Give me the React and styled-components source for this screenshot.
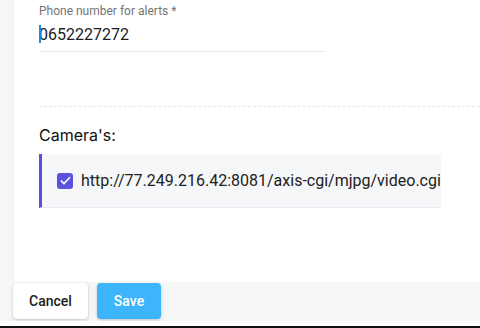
import React from "react";
import styled, { createGlobalStyle } from "styled-components";

const Global = createGlobalStyle`
  html, body {
    margin: 0;
    padding: 0;
    background: #f5f6f8;
    font-family: Roboto, "Liberation Sans", sans-serif;
  }
`;

const Page = styled.div`
  width: 480px;
  height: 328px;
  display: flex;
  flex-direction: column;
  overflow: hidden;
  background: #f5f6f8;
`;

const Panel = styled.div`
  height: 282px;
  margin-left: 13px;
  padding: 3px 0 0 25px;
  box-sizing: border-box;
  background: #fff;
  border-left: 1px solid #eef0f3;
`;

const Field = styled.div`
  width: 287px;
  border-bottom: 1px solid #e7e9ef;
  padding-bottom: 6px;
`;

const Label = styled.div`
  font-size: 12px;
  line-height: 16px;
  color: #757575;
`;

const Value = styled.div`
  position: relative;
  margin-top: 6px;
  font-size: 16px;
  line-height: 20px;
  color: #212121;
  &::before {
    content: "";
    position: absolute;
    left: 0;
    top: 0;
    width: 2px;
    height: 18px;
    background: #1e88e5;
  }
`;

const Divider = styled.div`
  margin-top: 54px;
  border-top: 1px dashed #e3e5e9;
`;

const SectionTitle = styled.h3`
  margin: 18px 0 0;
  font-family: Inter, "Open Sans", sans-serif;
  font-size: 16px;
  font-weight: 400;
  line-height: 21px;
  color: #111;
`;

const CameraRow = styled.label`
  margin-top: 8px;
  width: 402px;
  height: 54px;
  box-sizing: border-box;
  display: flex;
  align-items: center;
  gap: 8px;
  padding-left: 15px;
  background: #f6f7f9;
  border-left: 3px solid #5b4fe0;
  border-bottom: 1px solid #e8eaf0;
  overflow: hidden;
  white-space: nowrap;
`;

const Check = styled.span`
  flex: none;
  width: 16px;
  height: 16px;
  border-radius: 3px;
  background: ${(p) => (p.checked ? "#5c52e0" : "#fff")};
  display: flex;
  align-items: center;
  justify-content: center;
`;

const Url = styled.span`
  font-size: 16px;
  color: #212121;
`;

const Footer = styled.div`
  height: 39px;
  display: flex;
  align-items: flex-start;
  gap: 9px;
  padding: 1px 0 0 13px;
  box-sizing: border-box;
`;

const Button = styled.button`
  height: 36px;
  padding: 0 ${(p) => (p.primary ? "17px" : "16px")};
  border: none;
  border-radius: 4px;
  font-family: Roboto, "Liberation Sans", sans-serif;
  font-size: 14px;
  font-weight: 500;
  color: ${(p) => (p.primary ? "#fff" : "#1b1b1b")};
  background: ${(p) => (p.primary ? "#3db5fc" : "#fff")};
  box-shadow: 0 1px 3px rgba(0, 0, 0, 0.22);
  cursor: pointer;
`;

const Gap = styled.div`
  height: 5px;
  background: #fff;
`;

const Edge = styled.div`
  height: 2px;
  background: #111;
`;

const cameras = ["http://77.249.216.42:8081/axis-cgi/mjpg/video.cgi"];

export default function App() {
  return (
    <Page>
      <Global />
      <Panel>
        <Field>
          <Label>Phone number for alerts *</Label>
          <Value>0652227272</Value>
        </Field>
        <Divider />
        <SectionTitle>Camera's:</SectionTitle>
        {cameras.map((url) => (
          <CameraRow key={url}>
            <Check checked>
              <svg width="11" height="9" viewBox="0 0 11 9" fill="none">
                <path d="M1 4.6 L4 7.5 L10 1.3" stroke="#fff" strokeWidth="1.6" />
              </svg>
            </Check>
            <Url>{url}</Url>
          </CameraRow>
        ))}
      </Panel>
      <Footer>
        <Button>Cancel</Button>
        <Button primary>Save</Button>
      </Footer>
      <Gap />
      <Edge />
    </Page>
  );
}
